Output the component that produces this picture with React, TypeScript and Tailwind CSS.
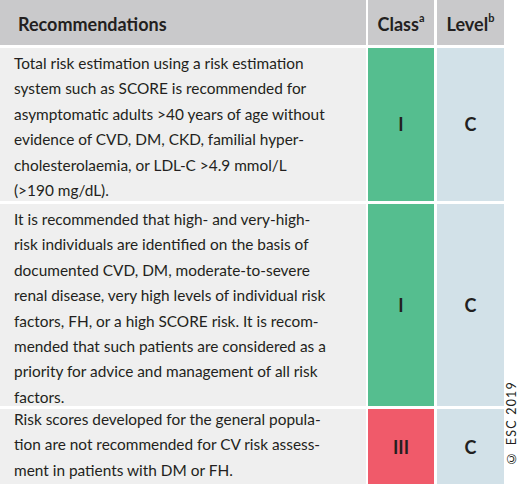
const rows = [
  {
    lines: [
      "Total risk estimation using a risk estimation",
      "system such as SCORE is recommended for",
      "asymptomatic adults >40 years of age without",
      "evidence of CVD, DM, CKD, familial hyper-",
      "cholesterolaemia, or LDL-C >4.9 mmol/L",
      "(>190 mg/dL).",
    ],
    cls: "I",
    level: "C",
    color: "bg-[#55be8f]",
    height: "h-[153px]",
    pad: "pt-[3px]",
  },
  {
    lines: [
      "It is recommended that high- and very-high-",
      "risk individuals are identified on the basis of",
      "documented CVD, DM, moderate-to-severe",
      "renal disease, very high levels of individual risk",
      "factors, FH, or a high SCORE risk. It is recom-",
      "mended that such patients are considered as a",
      "priority for advice and management of all risk",
      "factors.",
    ],
    cls: "I",
    level: "C",
    color: "bg-[#55be8f]",
    height: "h-[202px]",
    pad: "pt-[3px]",
  },
  {
    lines: [
      "Risk scores developed for the general popula-",
      "tion are not recommended for CV risk assess-",
      "ment in patients with DM or FH.",
    ],
    cls: "III",
    level: "C",
    color: "bg-[#f05a6a]",
    height: "h-[76px]",
    pad: "-mt-[2px]",
  },
]

export default function App() {
  return (
    <div className="w-[520px] h-[484px] overflow-hidden bg-white flex text-[#231f20] font-['Lato','Noto_Sans',sans-serif]">
      <div className="w-[504px] flex flex-col gap-[3px]">
        {/* header */}
        <div className="flex h-[45px] gap-[2px] shrink-0">
          <div className="w-[366px] bg-[#c9c9cb] flex items-center pl-[18px] pt-[4px] text-[18px] font-bold">
            Recommendations
          </div>
          <div className="w-[66px] bg-[#c9c9cb] flex items-center justify-center pt-[4px] text-[18px] font-bold">
            Class<sup className="text-[11px] -top-[7px]">a</sup>
          </div>
          <div className="w-[67px] ml-[1px] bg-[#c9c9cb] flex items-center justify-center pt-[4px] text-[18px] font-bold">
            Level<sup className="text-[11px] -top-[7px]">b</sup>
          </div>
        </div>
        {rows.map((row, i) => (
          <div key={i} className={`flex gap-[2px] shrink-0 ${row.height}`}>
            <div className="w-[366px] bg-[#efefef] pl-[14px] text-[15.4px] leading-[25.4px]">
              <div className={row.pad}>
                {row.lines.map((l, j) => (
                  <div key={j} className="whitespace-nowrap">{l}</div>
                ))}
              </div>
            </div>
            <div className={`w-[66px] ${row.color} flex items-center justify-center text-[18px] font-bold`}>
              {row.cls}
            </div>
            <div className="w-[67px] ml-[1px] bg-[#d2e1e8] flex items-center justify-center text-[18px] font-bold">
              {row.level}
            </div>
          </div>
        ))}
      </div>
      <div className="flex-1 flex flex-col justify-end items-center pb-[18px]">
        <div className="[writing-mode:vertical-rl] rotate-180 text-[12.5px] leading-none tracking-[1.2px] text-[#231f20] whitespace-nowrap">
          © ESC 2019
        </div>
      </div>
    </div>
  )
}
